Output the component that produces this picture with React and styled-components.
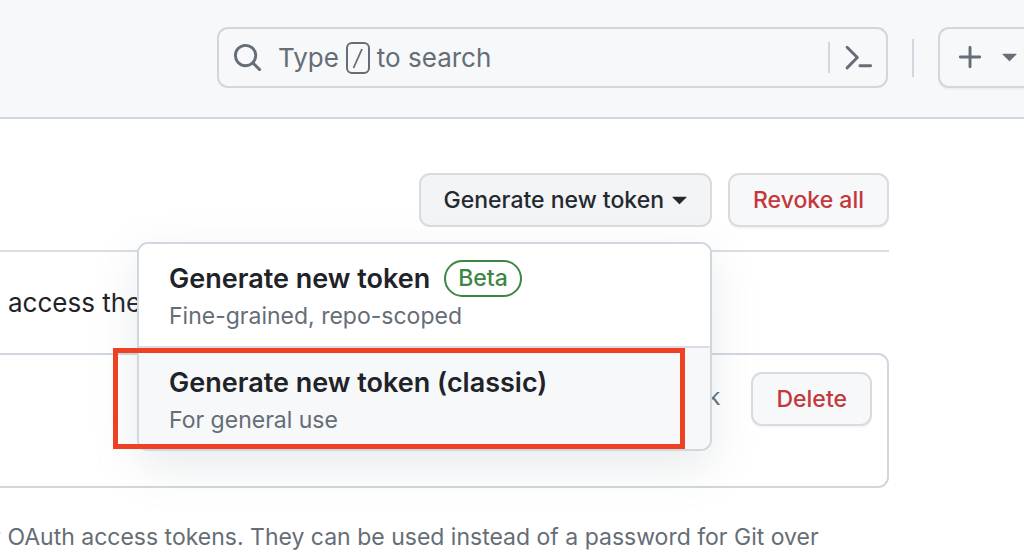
import React from 'react';
import styled, { createGlobalStyle } from 'styled-components';

const GlobalStyle = createGlobalStyle`
  * {
    box-sizing: border-box;
  }

  body {
    margin: 0;
    overflow: hidden;
    background: #ffffff;
    color: #1f2328;
    font-family: Inter, 'Liberation Sans', sans-serif;
    font-size: 23px;
  }

  button {
    font-family: inherit;
    cursor: pointer;
  }
`;

const Header = styled.header`
  display: flex;
  align-items: center;
  gap: 24px;
  padding: 27px 0 29px 217px;
  background: #f6f8fa;
  border-bottom: 2px solid #d0d7de;
`;

const SearchBox = styled.button`
  flex: 1;
  display: flex;
  align-items: center;
  height: 61px;
  padding: 0 12px 0 13px;
  border: 2px solid #d0d7de;
  border-radius: 11px;
  background: #f6f8fa;
  color: #656d76;
  font-size: 26px;
`;

const SearchLabel = styled.span`
  flex: 1;
  display: flex;
  align-items: center;
  gap: 7px;
  margin-left: 15px;
`;

const Divider = styled.span`
  width: 2px;
  height: ${({ $height }) => $height}px;
  margin-right: ${({ $gap }) => $gap || 0}px;
  background: #d0d7de;
`;

const CreateButton = styled.button`
  display: flex;
  align-items: center;
  gap: 8px;
  width: 86px;
  height: 61px;
  padding: 0 15px;
  border: 2px solid #d0d7de;
  border-right: 0;
  border-radius: 11px 0 0 11px;
  background: #f6f8fa;
  color: #656d76;
  box-shadow: 0 2px 0 rgba(31, 35, 40, 0.04);
`;

const Icon = styled.svg`
  flex: none;
  display: block;
  fill: currentColor;
`;

const Main = styled.main`
  padding: 54px 135px 0 0;
`;

const Toolbar = styled.div`
  display: flex;
  justify-content: flex-end;
  gap: 16px;
  padding-bottom: 23px;
  border-bottom: 2px solid #d8dee4;
`;

const Dropdown = styled.div`
  position: relative;
`;

const Button = styled.button`
  display: flex;
  align-items: center;
  height: 54px;
  padding: 0 ${({ $caret }) => ($caret ? 15 : 23)}px 0 23px;
  border: 2px solid #d9dbde;
  border-radius: 11px;
  background: ${({ $caret }) => ($caret ? '#f3f4f6' : '#f6f8fa')};
  color: ${({ $danger }) => ($danger ? '#c4373a' : '#24292f')};
  box-shadow: ${({ $caret }) => ($caret ? 'none' : '0 2px 0 rgba(31, 35, 40, 0.04)')};
  font-size: 23px;
  font-weight: 500;
  white-space: nowrap;
`;

const Menu = styled.div`
  position: absolute;
  z-index: 1;
  top: 69px;
  right: 0;
  width: 575px;
  border: 2px solid #d0d7de;
  border-radius: 11px;
  background: #ffffff;
  box-shadow: 0 15px 45px rgba(140, 149, 159, 0.2);
`;

const MenuItem = styled.button`
  position: relative;
  display: flex;
  flex-direction: column;
  justify-content: flex-start;
  width: 100%;
  height: ${({ $selected }) => ($selected ? 103 : 102)}px;
  padding: 15px 30px 0;
  border: 0;
  border-radius: ${({ $selected }) => ($selected ? '0 0 9px 9px' : '9px 9px 0 0')};
  border-top: ${({ $selected }) => ($selected ? '2px solid #d8dee4' : '0')};
  background: ${({ $selected }) => ($selected ? '#f6f8fa' : '#ffffff')};
  text-align: left;
`;

const ItemTitle = styled.span`
  display: flex;
  align-items: center;
  gap: 14px;
  height: 38px;
  color: #1f2328;
  font-size: 27px;
  font-weight: 600;
`;

const ItemNote = styled.span`
  color: #656d76;
  font-size: 23px;
  line-height: 38px;
`;

const Badge = styled.span`
  padding: 0 12px;
  border: 2px solid #3b8743;
  border-radius: 19px;
  color: #3b8743;
  font-size: 23px;
  font-weight: 500;
  line-height: 33px;
`;

const Highlight = styled.span`
  position: absolute;
  top: 0;
  bottom: 0;
  left: -26px;
  right: 25px;
  border: 5px solid #ee4023;
`;

const Intro = styled.p`
  margin: 0;
  padding: 32px 0 31px 8px;
  font-size: 26px;
  line-height: 38px;
`;

const TokenRow = styled.section`
  display: flex;
  align-items: flex-start;
  justify-content: flex-end;
  gap: 31px;
  height: 135px;
  padding: 17px 15px;
  border: 2px solid #d0d7de;
  border-left: 0;
  border-radius: 0 11px 11px 0;
`;

const LastUsed = styled.span`
  color: #656d76;
  font-size: 23px;
  line-height: 50px;
`;

const Footnote = styled.p`
  margin: 30px 0 0 -12px;
  color: #656d76;
  font-size: 23px;
  line-height: 38px;
  white-space: nowrap;
`;

const SearchIcon = () => (
  <Icon width="31" height="31" viewBox="0 0 16 16" aria-hidden="true">
    <path d="M10.68 11.74a6 6 0 0 1-7.922-8.982 6 6 0 0 1 8.982 7.922l3.04 3.04a.749.749 0 0 1-.326 1.275.749.749 0 0 1-.734-.215ZM11.5 7a4.499 4.499 0 1 0-8.997 0A4.499 4.499 0 0 0 11.5 7Z" />
  </Icon>
);

const SlashKeyIcon = () => (
  <Icon width="24" height="32" viewBox="0 0 24 32" aria-label="/">
    <rect x="1" y="1" width="22" height="30" rx="5" fill="none" stroke="currentColor" strokeWidth="2" />
    <path d="M7.5 26 16 7" fill="none" stroke="currentColor" strokeWidth="1.8" />
  </Icon>
);

const CommandIcon = () => (
  <Icon width="31" height="31" viewBox="0 0 16 16" aria-hidden="true">
    <path d="m6.354 8.04-4.773 4.773a.75.75 0 1 0 1.061 1.06L7.945 8.57a.75.75 0 0 0 0-1.06L2.642 2.206a.75.75 0 0 0-1.06 1.061L6.353 8.04ZM8.75 11.5a.75.75 0 0 0 0 1.5h5.5a.75.75 0 0 0 0-1.5h-5.5Z" />
  </Icon>
);

const PlusIcon = () => (
  <Icon width="31" height="31" viewBox="0 0 16 16" aria-hidden="true">
    <path d="M7.75 2a.75.75 0 0 1 .75.75V7h4.25a.75.75 0 0 1 0 1.5H8.5v4.25a.75.75 0 0 1-1.5 0V8.5H2.75a.75.75 0 0 1 0-1.5H7V2.75A.75.75 0 0 1 7.75 2Z" />
  </Icon>
);

const CaretIcon = () => (
  <Icon width="31" height="31" viewBox="0 1 16 16" aria-hidden="true">
    <path d="m4.427 7.427 3.396 3.396a.25.25 0 0 0 .354 0l3.396-3.396A.25.25 0 0 0 11.396 7H4.604a.25.25 0 0 0-.177.427Z" />
  </Icon>
);

const App = () => {
  return (
    <>
      <GlobalStyle />
      <Header>
        <SearchBox type="button">
          <SearchIcon />
          <SearchLabel>
            Type <SlashKeyIcon /> to search
          </SearchLabel>
          <Divider $height={31} $gap={13} />
          <CommandIcon />
        </SearchBox>
        <Divider $height={38} />
        <CreateButton type="button" aria-label="Create new">
          <PlusIcon />
          <CaretIcon />
        </CreateButton>
      </Header>
      <Main>
        <Toolbar>
          <Dropdown>
            <Button type="button" $caret aria-expanded="true">
              Generate new token
              <CaretIcon />
            </Button>
            <Menu>
              <MenuItem type="button">
                <ItemTitle>
                  Generate new token <Badge>Beta</Badge>
                </ItemTitle>
                <ItemNote>Fine-grained, repo-scoped</ItemNote>
              </MenuItem>
              <MenuItem type="button" $selected>
                <ItemTitle>Generate new token (classic)</ItemTitle>
                <ItemNote>For general use</ItemNote>
                <Highlight />
              </MenuItem>
            </Menu>
          </Dropdown>
          <Button type="button" $danger>Revoke all</Button>
        </Toolbar>
        <Intro>access the</Intro>
        <TokenRow>
          <LastUsed>week</LastUsed>
          <Button type="button" $danger>Delete</Button>
        </TokenRow>
        <Footnote>
          y OAuth access tokens. They can be used instead of a password for Git over
        </Footnote>
      </Main>
    </>
  );
};

export default App;
